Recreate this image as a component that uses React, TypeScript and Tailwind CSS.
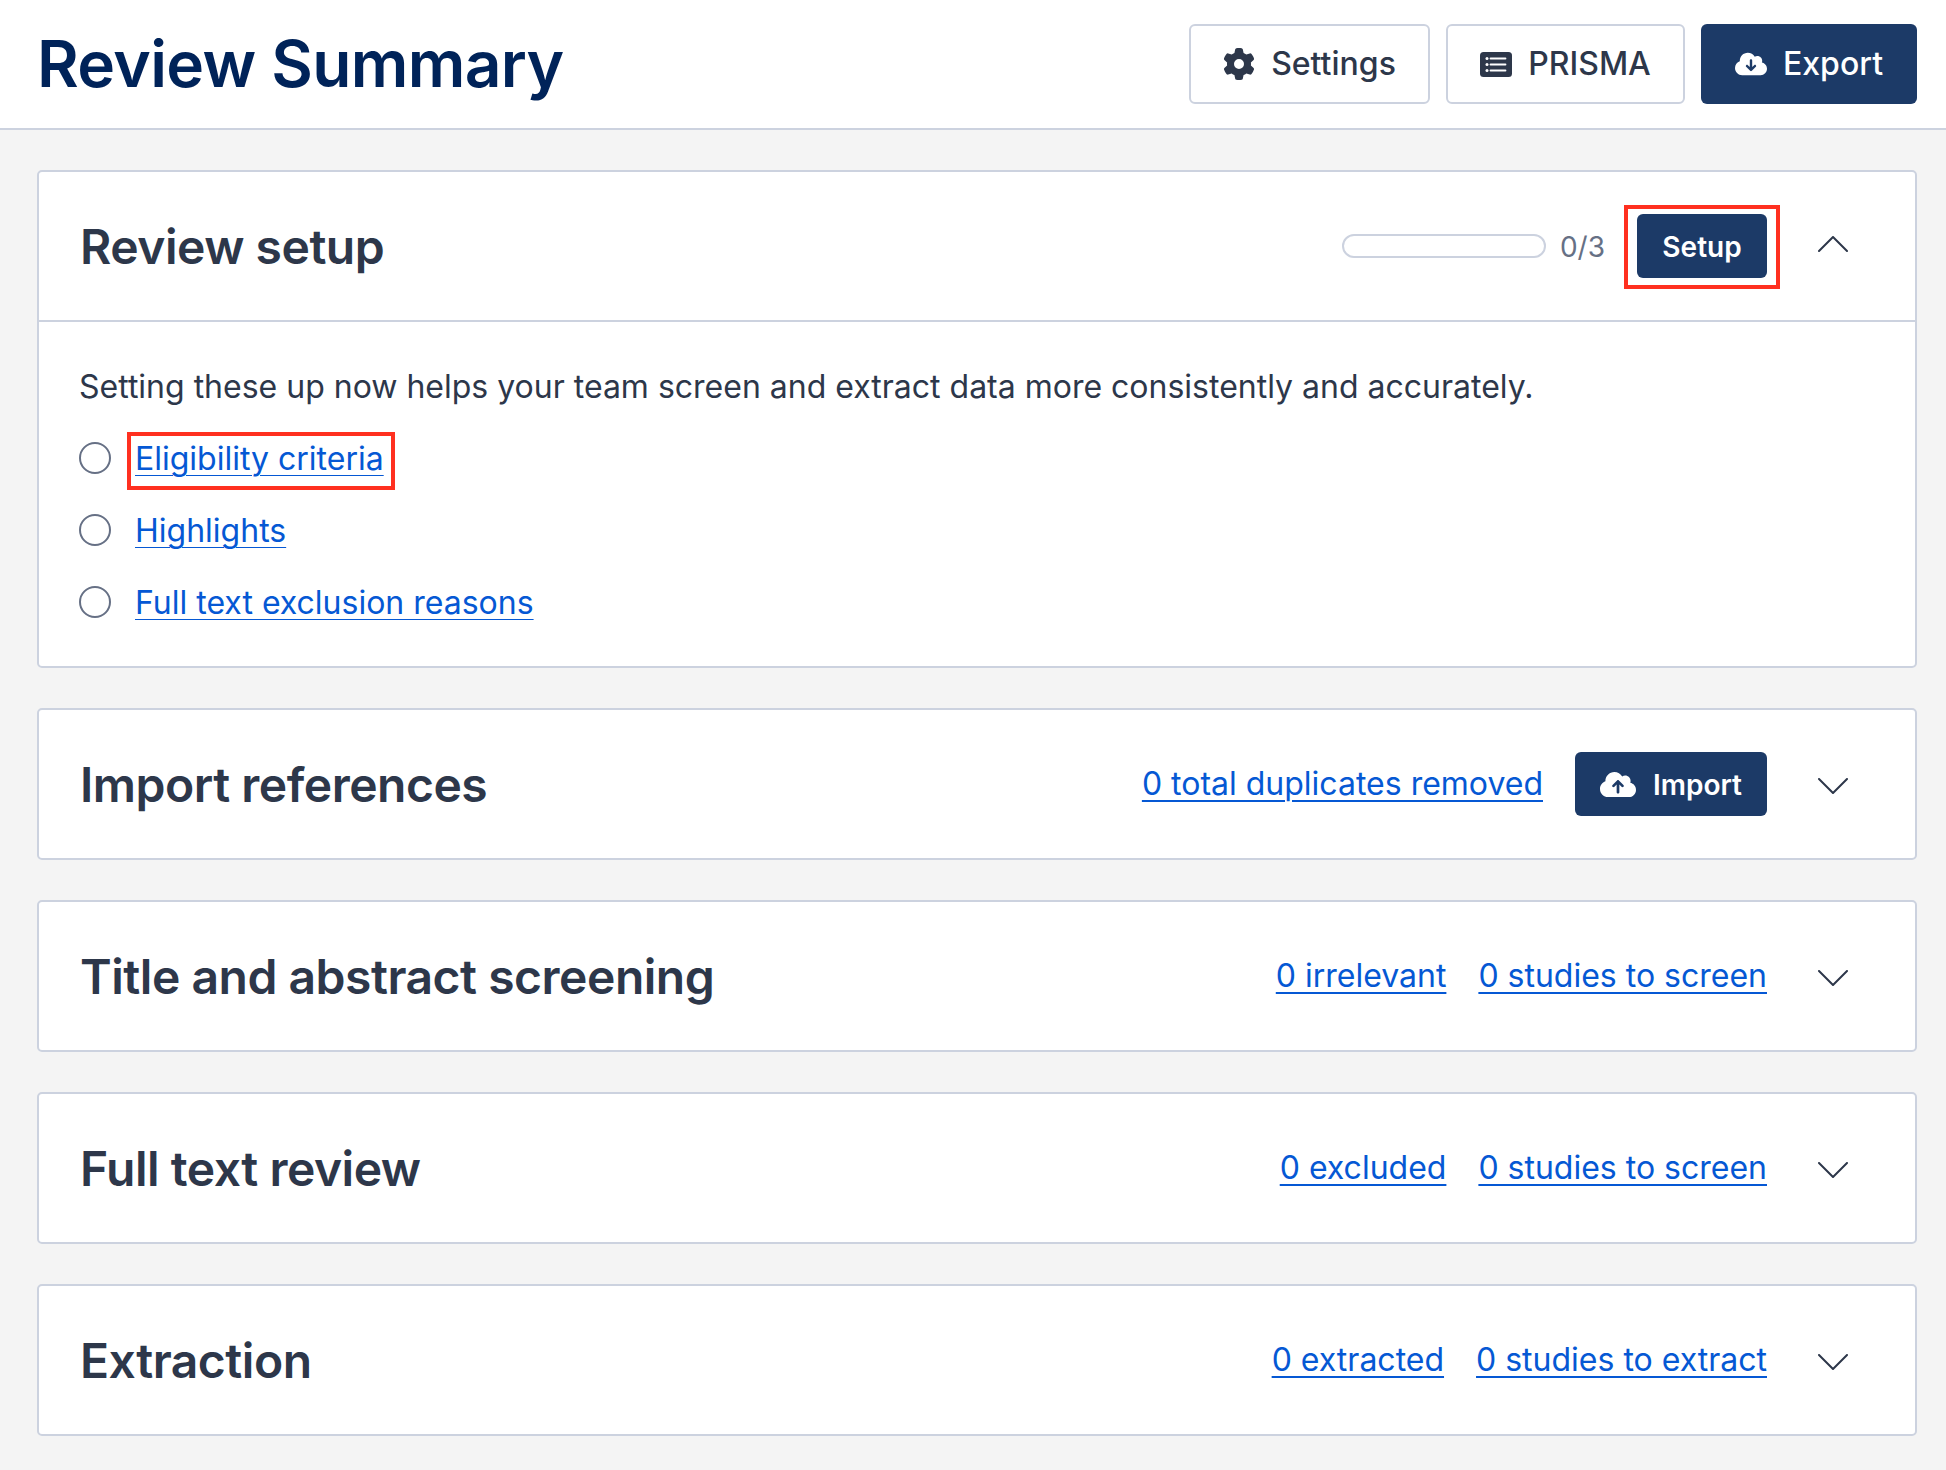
import React from "react";
import { FaCloudArrowDown, FaCloudArrowUp, FaGear } from "react-icons/fa6";

interface SectionProps {
  title: string;
  open?: boolean;
  actions: React.ReactNode;
  children?: React.ReactNode;
}

interface StatLinkProps {
  text: string;
}

const ListIcon = () => {
  return (
    <svg viewBox="0 0 32 25" className="h-[25px] w-8" fill="none">
      <rect width="32" height="25" rx="3.5" fill="#2d374a" />
      <path d="M10.5 6.5H25.5M10.5 12.5H25.5M10.5 18.5H25.5" stroke="white" strokeWidth="1.8" strokeLinecap="round" />
      <circle cx="7" cy="6.5" r="1.5" fill="white" />
      <circle cx="7" cy="12.5" r="1.5" fill="white" />
      <circle cx="7" cy="18.5" r="1.5" fill="white" />
    </svg>
  );
};

const Chevron = ({ up }: { up?: boolean }) => {
  return (
    <svg viewBox="0 0 30 16" className="h-4 w-[30px]" fill="none" stroke="#2d374a" strokeWidth="2" strokeLinecap="round" strokeLinejoin="round">
      <path d={up ? "M1 15L15 1L29 15" : "M1 1L15 15L29 1"} />
    </svg>
  );
};

const StatLink = ({ text }: StatLinkProps) => {
  return (
    <a href="#" className="text-[32px] leading-10 text-[#0558d4] underline decoration-2 underline-offset-[5px]">
      {text}
    </a>
  );
};

const Section = ({ title, open, actions, children }: SectionProps) => {
  return (
    <section className="rounded-[5px] border-2 border-[#ccd2df] bg-white">
      <div className="flex h-[148px] items-center justify-between pr-[67px] pl-[41px]">
        <h2 className="pt-0.5 text-[48px] leading-none font-semibold tracking-[-0.48px]">{title}</h2>
        <div className="flex items-center">
          {actions}
          <button className={open ? "ml-[51px] pb-1" : "ml-[51px] pt-1"}>
            <Chevron up={open} />
          </button>
        </div>
      </div>
      {children}
    </section>
  );
};

const setupItems = ["Eligibility criteria", "Highlights", "Full text exclusion reasons"];

const App = () => {
  return (
    <div className="h-[1470px] w-[1946px] overflow-hidden bg-[#f4f4f4] font-['Inter',sans-serif] text-[#2d374a]">
      <header className="flex h-[130px] items-center justify-between border-b-2 border-[#ccd2df] bg-white pr-[29px] pl-[37px]">
        <h1 className="text-[64px] leading-none font-semibold tracking-[-0.64px] text-[#002359]">Review Summary</h1>
        <div className="flex gap-4 text-[32px] font-medium">
          <button className="flex h-20 w-[241px] items-center justify-center gap-4 rounded-md border-2 border-[#ccd2df]">
            <FaGear className="size-8" />
            Settings
          </button>
          <button className="flex h-20 w-[239px] items-center justify-center gap-4 rounded-md border-2 border-[#ccd2df]">
            <ListIcon />
            PRISMA
          </button>
          <button className="flex h-20 w-[216px] items-center justify-center gap-4 rounded-md bg-[#1c3a67] text-white">
            <FaCloudArrowDown className="h-[26px] w-8" />
            Export
          </button>
        </div>
      </header>

      <main className="flex flex-col gap-10 pt-10 pr-[29px] pl-[37px]">
        <Section
          title="Review setup"
          open
          actions={
            <>
              <div className="h-6 w-[204px] rounded-full border-2 border-[#ccd2df]" />
              <span className="ml-[14px] pt-0.5 text-[28px] text-[#667085]">0/3</span>
              <div className="relative ml-8 before:absolute before:-inset-x-[13px] before:-top-[9px] before:-bottom-[11px] before:border-4 before:border-[#ff3020]">
                <button className="relative flex h-16 w-[130px] items-center justify-center rounded-md bg-[#1c3a67] pt-0.5 text-[28px] font-semibold text-white">
                  Setup
                </button>
              </div>
            </>
          }
        >
          <div className="h-[346px] border-t-2 border-[#ccd2df] px-[40px] pt-[41px]">
            <p className="mb-[11px] text-[32px] leading-[48px]">
              Setting these up now helps your team screen and extract data more consistently and accurately.
            </p>
            <ul>
              {setupItems.map((item, index) => (
                <li key={item} className="flex h-[72px] items-center">
                  <span className="size-8 rounded-full border-2 border-[#667085]" />
                  <span className={index === 0 ? "relative ml-6 pt-0.5 before:absolute before:-left-2 before:-right-[11px] before:-top-[5px] before:-bottom-[11px] before:border-4 before:border-[#ff3020]" : "ml-6 pt-0.5"}>
                    <a href="#" className="relative text-[32px] leading-10 text-[#0558d4] underline decoration-1 underline-offset-[5px]">
                      {item}
                    </a>
                  </span>
                </li>
              ))}
            </ul>
          </div>
        </Section>

        <Section
          title="Import references"
          actions={
            <>
              <StatLink text="0 total duplicates removed" />
              <button className="ml-8 flex h-16 w-[192px] items-center justify-center gap-[17px] rounded-md bg-[#1c3a67] text-[28px] font-semibold text-white">
                <FaCloudArrowUp className="h-[29px] w-9" />
                <span className="pt-0.5">Import</span>
              </button>
            </>
          }
        />
        <Section
          title="Title and abstract screening"
          actions={
            <div className="flex gap-8">
              <StatLink text="0 irrelevant" />
              <StatLink text="0 studies to screen" />
            </div>
          }
        />
        <Section
          title="Full text review"
          actions={
            <div className="flex gap-8">
              <StatLink text="0 excluded" />
              <StatLink text="0 studies to screen" />
            </div>
          }
        />
        <Section
          title="Extraction"
          actions={
            <div className="flex gap-8">
              <StatLink text="0 extracted" />
              <StatLink text="0 studies to extract" />
            </div>
          }
        />
      </main>
    </div>
  );
};

export default App;
